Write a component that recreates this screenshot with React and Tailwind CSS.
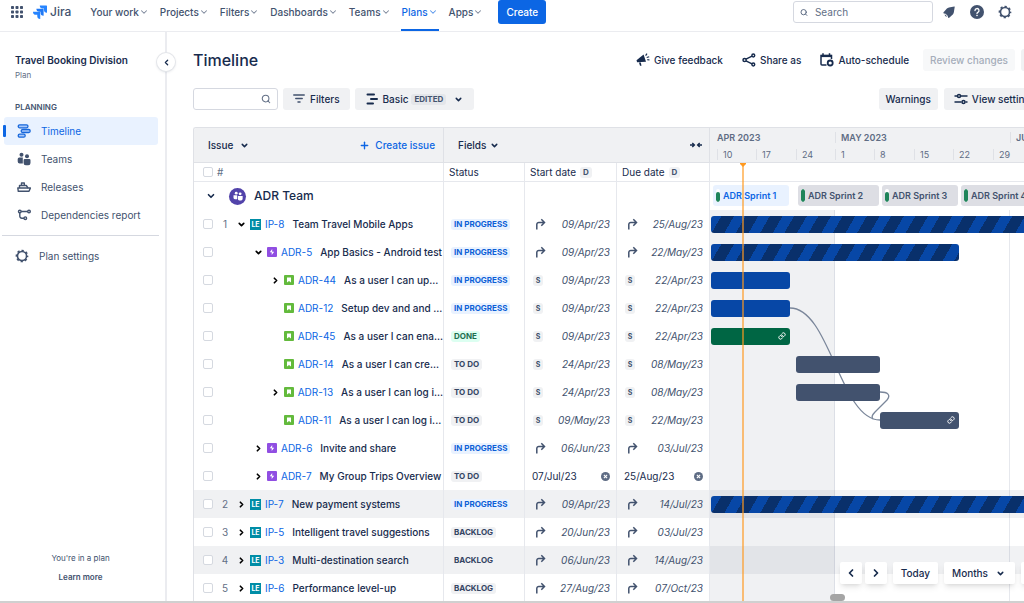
import { ChevronDown, ChevronLeft, ChevronRight, Plus, Search } from 'lucide-react'

const DAY_WIDTH = 5.63
const MAY_FIRST = 125

const navItems = ['Your work', 'Projects', 'Filters', 'Dashboards', 'Teams', 'Plans', 'Apps']

const sideItems = [
  { label: 'Timeline', icon: TimelineIcon, active: true },
  { label: 'Teams', icon: TeamsIcon },
  { label: 'Releases', icon: ShipIcon },
  { label: 'Dependencies report', icon: DependencyIcon },
]

// Bar start and end are days counted from 1 May 2023.
const issues = [
  { key: 'IP-8', level: 0, number: 1, type: 'initiative', toggle: 'open', title: 'Team Travel Mobile Apps', status: 'IN PROGRESS', source: 'rollup', start: '09/Apr/23', due: '25/Aug/23', bar: { from: -22, to: 117, kind: 'striped' } },
  { key: 'ADR-5', level: 1, type: 'epic', toggle: 'open', title: 'App Basics - Android test', status: 'IN PROGRESS', source: 'rollup', start: '09/Apr/23', due: '22/May/23', bar: { from: -22, to: 22, kind: 'striped' } },
  { key: 'ADR-44', level: 2, type: 'story', toggle: 'closed', title: 'As a user I can up...', status: 'IN PROGRESS', source: 'sprint', start: '09/Apr/23', due: '22/Apr/23', bar: { from: -22, to: -8, kind: 'progress' } },
  { key: 'ADR-12', level: 2, type: 'story', title: 'Setup dev and and ...', status: 'IN PROGRESS', source: 'sprint', start: '09/Apr/23', due: '22/Apr/23', bar: { from: -22, to: -8, kind: 'progress' } },
  { key: 'ADR-45', level: 2, type: 'story', title: 'As a user I can ena...', status: 'DONE', source: 'sprint', start: '09/Apr/23', due: '22/Apr/23', bar: { from: -22, to: -8, kind: 'done', linked: true } },
  { key: 'ADR-14', level: 2, type: 'story', title: 'As a user I can cre...', status: 'TO DO', source: 'sprint', start: '24/Apr/23', due: '08/May/23', bar: { from: -7, to: 8, kind: 'todo' } },
  { key: 'ADR-13', level: 2, type: 'story', toggle: 'closed', title: 'As a user I can log i...', status: 'TO DO', source: 'sprint', start: '24/Apr/23', due: '08/May/23', bar: { from: -7, to: 8, kind: 'todo' } },
  { key: 'ADR-11', level: 2, type: 'story', title: 'As a user I can log i...', status: 'TO DO', source: 'sprint', start: '09/May/23', due: '22/May/23', bar: { from: 8, to: 22, kind: 'todo', linked: true } },
  { key: 'ADR-6', level: 1, type: 'epic', toggle: 'closed', title: 'Invite and share', status: 'IN PROGRESS', source: 'rollup', start: '06/Jun/23', due: '03/Jul/23' },
  { key: 'ADR-7', level: 1, type: 'epic', toggle: 'closed', title: 'My Group Trips Overview', status: 'TO DO', source: 'manual', start: '07/Jul/23', due: '25/Aug/23' },
  { key: 'IP-7', level: 0, number: 2, type: 'initiative', toggle: 'closed', title: 'New payment systems', status: 'IN PROGRESS', source: 'rollup', start: '09/Apr/23', due: '14/Jul/23', shaded: true, bar: { from: -22, to: 75, kind: 'striped' } },
  { key: 'IP-5', level: 0, number: 3, type: 'initiative', toggle: 'closed', title: 'Intelligent travel suggestions', status: 'BACKLOG', source: 'rollup', start: '20/Jun/23', due: '03/Jul/23' },
  { key: 'IP-3', level: 0, number: 4, type: 'initiative', toggle: 'closed', title: 'Multi-destination search', status: 'BACKLOG', source: 'rollup', start: '06/Jun/23', due: '14/Aug/23', shaded: true },
  { key: 'IP-6', level: 0, number: 5, type: 'initiative', toggle: 'closed', title: 'Performance level-up', status: 'BACKLOG', source: 'rollup', start: '27/Aug/23', due: '07/Oct/23' },
]

const months = [
  { label: 'APR 2023', at: -22 },
  { label: 'MAY 2023', at: 0, tick: true },
  { label: 'JUN 2023', at: 31, tick: true },
]

const weeks = [
  { label: '10', at: -21 },
  { label: '17', at: -14 },
  { label: '24', at: -7 },
  { label: '1', at: 0 },
  { label: '8', at: 7 },
  { label: '15', at: 14 },
  { label: '22', at: 21 },
  { label: '29', at: 28 },
]

const sprints = [
  { label: 'ADR Sprint 1', from: -22, to: -8, active: true },
  { label: 'ADR Sprint 2', from: -7, to: 8, full: true },
  { label: 'ADR Sprint 3', from: 8, to: 22 },
  { label: 'ADR Sprint 4', from: 22, to: 36, full: true },
]

const statusClass = {
  'IN PROGRESS': 'bg-[#e9f2ff] text-[#0c5fd6]',
  DONE: 'bg-[#dcfff1] text-[#216e4e]',
  'TO DO': 'bg-[#f0f1f3] text-[#344563]',
  BACKLOG: 'bg-[#f0f1f3] text-[#344563]',
}

const barClass = {
  striped: 'bg-[repeating-linear-gradient(120deg,#0747a6_0px,#0747a6_9px,#09306b_9px,#09306b_20px,#0747a6_20px,#0747a6_21px)]',
  progress: 'bg-[#0747a6]',
  done: 'bg-[#006644]',
  todo: 'bg-[#42526e]',
}

const indentClass = ['pl-0', 'pl-[17px]', 'pl-[34px]']

function dayX(day) {
  return Math.round(MAY_FIRST + day * DAY_WIDTH)
}

function AppsIcon() {
  return (
    <svg width="12" height="12" viewBox="0 0 12 12" fill="#42526e">
      {[0, 4.5, 9].map((y) => [0, 4.5, 9].map((x) => <rect key={`${x}-${y}`} x={x} y={y} width="3" height="3" rx="0.7" />))}
    </svg>
  )
}

function JiraMark() {
  return (
    <svg width="14" height="14" viewBox="0 0 24 24">
      <path d="M23 1H11.6a5.1 5.1 0 0 0 5.1 5.1h2.1v2a5.1 5.1 0 0 0 5.2 5.1V2a1 1 0 0 0-1-1z" fill="#2684ff" />
      <path d="M17.2 6.3H5.8a5.1 5.1 0 0 0 5.1 5.1H13v2a5.1 5.1 0 0 0 5.2 5.2V7.3a1 1 0 0 0-1-1z" fill="#1f78f5" />
      <path d="M11.5 11.6H0a5.1 5.1 0 0 0 5.2 5.2h2.1v2a5.1 5.1 0 0 0 5.1 5.1V12.6a1 1 0 0 0-1-1z" fill="#2684ff" />
    </svg>
  )
}

function BellIcon() {
  return (
    <svg width="14" height="14" viewBox="0 0 14 14" fill="#42526e">
      <path d="M12.300 1.500 7 2.400a3.500 3.500 0 0 0-2.100 1.200L1.600 7.300c-.4.500-.2 1 .3 1.100l1.700.4 2 2 .5 1.800c.2.500.7.600 1.100.2l3.600-3.400a3.500 3.500 0 0 0 1-2l.9-5.500c0-.3-.1-.4-.4-.4z" />
      <path d="M2.900 9.200a1.800 1.800 0 0 0 2.300 2.300z" />
    </svg>
  )
}

function HelpIcon() {
  return (
    <svg width="14" height="14" viewBox="0 0 14 14">
      <circle cx="7" cy="7" r="7" fill="#42526e" />
      <path d="M5 5.500a2 2 0 1 1 2.900 1.800c-.6.300-.9.600-.9 1.200" fill="none" stroke="#fff" strokeWidth="1.300" strokeLinecap="round" />
      <circle cx="7" cy="10.500" r="0.800" fill="#fff" />
    </svg>
  )
}

function GearIcon() {
  return (
    <svg width="14" height="14" viewBox="0 0 24 24" fill="none" stroke="#42526e">
      <circle cx="12" cy="12" r="7.800" strokeWidth="2.800" />
      <circle cx="12" cy="12" r="9.500" strokeWidth="2.800" strokeDasharray="3.900 3.561" strokeDashoffset="1.950" />
    </svg>
  )
}

function TimelineIcon() {
  return (
    <svg width="14" height="14" viewBox="0 0 14 14" fill="#a9c9fb" stroke="#1868db" strokeWidth="1.300">
      <rect x="1.200" y="0.800" width="9.800" height="3" rx="1.500" />
      <rect x="4.200" y="5.500" width="9" height="3" rx="1.500" />
      <rect x="1.200" y="10.200" width="7" height="3" rx="1.500" />
    </svg>
  )
}

function TeamsIcon() {
  return (
    <svg width="14" height="14" viewBox="0 0 14 14" fill="#42526e">
      <circle cx="4.500" cy="2.700" r="2" />
      <path d="M0.700 7a1.500 1.500 0 0 1 1.500-1.500h3.600V11.500H2.700a2 2 0 0 1-2-2z" />
      <circle cx="10" cy="4.300" r="2" />
      <path d="M6.600 8.200A1.200 1.200 0 0 1 7.800 7h4.500a1.200 1.200 0 0 1 1.200 1.200V11a2.200 2.200 0 0 1-2.200 2.200H8.800A2.200 2.200 0 0 1 6.600 11z" />
    </svg>
  )
}

function ShipIcon() {
  return (
    <svg width="14" height="14" viewBox="0 0 14 14" fill="none" stroke="#42526e" strokeWidth="1.400" strokeLinejoin="round">
      <path d="M0.800 8h12.600l-1.400 3.300H1.300z" />
      <path d="M2.500 8V5.500h6.800L11 8M4.500 5.500V3h2.800v2.500" />
    </svg>
  )
}

function DependencyIcon() {
  return (
    <svg width="14" height="14" viewBox="0 0 14 14" fill="none" stroke="#42526e" strokeWidth="1.400">
      <circle cx="2.800" cy="3.500" r="1.300" />
      <circle cx="12" cy="3.500" r="1.300" />
      <circle cx="8.300" cy="10.200" r="1.300" />
      <path d="M4.100 3.500h6.600M2.800 4.800v3.200a2 2 0 0 0 2 2.200H7" />
    </svg>
  )
}

function MegaphoneIcon() {
  return (
    <svg width="14" height="14" viewBox="0 0 14 14" fill="#172b4d">
      <path d="M0.500 7.200 7.600 1.500 10 8.700 1.100 9.300z" />
      <path d="M3 9.500h1.800l.7 3.200H4z" />
      <path d="M9.600 2.700 11 0.600M10.700 4.500l2.500-.8M11.300 6.600l2.200.4" fill="none" stroke="#172b4d" strokeWidth="1.200" />
    </svg>
  )
}

function ShareIcon() {
  return (
    <svg width="14" height="14" viewBox="0 0 14 14" fill="none" stroke="#172b4d" strokeWidth="1.500">
      <circle cx="2.600" cy="7" r="1.600" />
      <circle cx="11.300" cy="2.500" r="1.400" />
      <circle cx="11.300" cy="11.500" r="1.400" />
      <path d="m4 6.200 6-3M4 7.800l6 3" />
    </svg>
  )
}

function ScheduleIcon() {
  return (
    <svg width="14" height="14" viewBox="0 0 14 14" fill="none" stroke="#172b4d" strokeWidth="1.500">
      <path d="M6.500 12H2a1 1 0 0 1-1-1V2.500h10.500V6" />
      <path d="M1 3h10.500" strokeWidth="2.200" />
      <path d="M3 0.300v2M9.500 0.300v2" />
      <circle cx="10.200" cy="10" r="2.500" strokeWidth="1.800" />
    </svg>
  )
}

function FilterIcon() {
  return (
    <svg width="12" height="12" viewBox="0 0 12 12" stroke="#42526e" strokeWidth="1.500" strokeLinecap="round">
      <path d="M0.800 2h10.400M2.800 5.500h6.400M5 9h2" />
    </svg>
  )
}

function RoadmapIcon() {
  return (
    <svg width="12" height="12" viewBox="0 0 12 12" stroke="#172b4d" strokeWidth="2" strokeLinecap="round">
      <path d="M1.500 1.500h6.500M5 6h6M1.500 10.500h5.500" />
    </svg>
  )
}

function SlidersIcon() {
  return (
    <svg width="14" height="12" viewBox="0 0 14 12" fill="none" stroke="#172b4d" strokeWidth="1.500">
      <path d="M0.500 3h3M6.500 3h7M0.500 9h7M11.500 9h2" />
      <circle cx="5" cy="3" r="1.500" />
      <circle cx="9.500" cy="9" r="1.500" />
    </svg>
  )
}

function CollapseIcon() {
  return (
    <svg width="12" height="8" viewBox="0 0 12 8" fill="none" stroke="#172b4d" strokeWidth="1.400">
      <path d="M0 4h4M2.300 1.900 4.400 4 2.300 6.100M12 4H8M9.700 1.900 7.600 4l2.100 2.100" />
    </svg>
  )
}

function RollupIcon() {
  return (
    <svg className="mx-[2px]" width="11" height="12" viewBox="0 0 11 12" fill="none" stroke="#42526e" strokeWidth="1.500">
      <path d="M1.800 11.500V6.500A2 2 0 0 1 3.800 4.500H9M6.300 1.300 9.500 4.500 6.300 7.700" />
    </svg>
  )
}

function ClearIcon() {
  return (
    <svg width="9" height="9" viewBox="0 0 10 10">
      <circle cx="5" cy="5" r="5" fill="#5e6c84" />
      <path d="m3.200 3.200 3.600 3.600M6.800 3.200 3.200 6.800" stroke="#fff" strokeWidth="1.200" />
    </svg>
  )
}

function LinkIcon() {
  return (
    <svg width="8" height="8" viewBox="0 0 24 24" fill="none" stroke="#fff" strokeWidth="3" strokeLinecap="round">
      <path d="M10 13a5 5 0 0 0 7.500.500l3-3a5 5 0 0 0-7-7l-1.700 1.700" />
      <path d="M14 11a5 5 0 0 0-7.500-.500l-3 3a5 5 0 0 0 7 7l1.700-1.700" />
    </svg>
  )
}

function TypeIcon({ type }) {
  if (type === 'initiative') {
    return (
      <span className="grid h-[11px] w-[11px] shrink-0 place-items-center bg-[#008da6] text-[7px] font-bold leading-none text-white">
        LE
      </span>
    )
  }

  if (type === 'epic') {
    return (
      <svg className="shrink-0" width="10" height="10" viewBox="0 0 10 10">
        <rect width="10" height="10" rx="1" fill="#904ee2" />
        <path d="M5.200 2 2.800 5.300h1.900V8l2.500-3.300H5.200z" fill="#fff" />
      </svg>
    )
  }

  return (
    <svg className="shrink-0" width="10" height="10" viewBox="0 0 10 10">
      <rect width="10" height="10" rx="1" fill="#63ba3c" />
      <path d="M3 2.400h4v5.200L5 5.900 3 7.600z" fill="#fff" />
    </svg>
  )
}

function Checkbox({ label }) {
  return (
    <input
      aria-label={label}
      className="h-[10px] w-[10px] shrink-0 appearance-none rounded-[2px] border border-[#d5d9e0] bg-white"
      type="checkbox"
    />
  )
}

function TopBar() {
  return (
    <header className="flex h-8 shrink-0 items-start border-b border-[#ebecf0] pl-[11px] pr-3">
      <div className="flex h-6 items-center">
        <button aria-label="Switch to" type="button">
          <AppsIcon />
        </button>
        <a className="ml-[10px] flex items-center gap-[3px] text-xs font-medium text-[#42526e]" href="#home">
          <JiraMark />
          Jira
        </a>
      </div>
      <nav className="ml-[18px] flex gap-[9px]">
        {navItems.map((item) => (
          <button
            className={`flex h-[31px] items-start border-b-2 px-px text-[10px] font-medium ${
              item === 'Plans' ? 'border-[#0c66e4] text-[#0c66e4]' : 'border-transparent text-[#42526e]'
            }`}
            key={item}
            type="button"
          >
            <span className="flex h-6 items-center whitespace-nowrap">
              {item}
              <ChevronDown className="opacity-70" size={10} strokeWidth={2.5} />
            </span>
          </button>
        ))}
      </nav>
      <button className="ml-[14px] h-6 rounded-[3px] bg-[#0c66e4] px-2 text-[10px] font-medium text-white" type="button">
        Create
      </button>
      <div className="ml-auto flex h-6 items-center gap-[14px] text-[#42526e]">
        <label className="-mr-[5px] flex h-[22px] w-[140px] items-center gap-[7px] rounded-[3px] border border-[#d5d8e0] px-[6px]">
          <Search size={9} strokeWidth={2.5} />
          <input
            aria-label="Search"
            className="w-full min-w-0 text-[10px] outline-none placeholder:text-[#626f86]"
            placeholder="Search"
            type="text"
          />
        </label>
        <button aria-label="Notifications" type="button">
          <BellIcon />
        </button>
        <button aria-label="Help" type="button">
          <HelpIcon />
        </button>
        <button aria-label="Settings" type="button">
          <GearIcon />
        </button>
      </div>
    </header>
  )
}

function Sidebar() {
  return (
    <aside className="relative flex w-[167px] shrink-0 flex-col border-r-2 border-[#ebecf0] pt-5">
      <h2 className="pl-[15px] text-[10px] font-semibold leading-4 text-[#172b4d]">Travel Booking Division</h2>
      <p className="pl-[15px] text-[8px] leading-[14px] text-[#626f86]">Plan</p>
      <p className="mt-[17px] pl-[15px] text-[8px] font-semibold leading-4 text-[#44546f]">PLANNING</p>
      <nav className="mt-[2px] pl-1 pr-[7px] text-[10px]">
        {sideItems.map((item) => (
          <a
            className={`relative flex h-7 items-center gap-[10px] rounded-[3px] pl-[13px] ${
              item.active ? 'bg-[#e9f2ff] text-[#0c66e4]' : 'text-[#42526e]'
            }`}
            href={`#${item.label}`}
            key={item.label}
          >
            {item.active && <span className="absolute -left-px top-2 h-3 w-[3px] rounded-[1px] bg-[#0c66e4]" />}
            <item.icon />
            {item.label}
          </a>
        ))}
      </nav>
      <hr className="ml-[2px] mr-[6px] mt-[6px] border-[#d5d8e0]" />
      <a className="mt-[6px] flex h-7 items-center gap-[10px] pl-[15px] text-[10px] text-[#42526e]" href="#settings">
        <GearIcon />
        Plan settings
      </a>
      <div className="mb-[14px] mt-auto pr-1 text-center text-[8px] leading-[19px] text-[#42526e]">
        <p>You're in a plan</p>
        <a className="font-semibold" href="#learn">
          Learn more
        </a>
      </div>
      <button
        aria-label="Collapse sidebar"
        className="absolute -right-[10px] top-[21px] grid h-[18px] w-[18px] place-items-center rounded-full bg-white text-[#172b4d] shadow-[0_0_0_1px_#e4e6ea,0_1px_3px_#091e4229]"
        type="button"
      >
        <ChevronLeft size={9} strokeWidth={3.5} />
      </button>
    </aside>
  )
}

function PageHeader() {
  return (
    <div className="flex h-[26px] items-center overflow-hidden">
      <h1 className="text-base font-medium text-[#172b4d]">Timeline</h1>
      <div className="-mr-4 ml-auto flex shrink-0 items-center text-[10px] font-medium text-[#172b4d]">
        <button className="flex items-center gap-1" type="button">
          <MegaphoneIcon />
          Give feedback
        </button>
        <button className="ml-[19px] flex items-center gap-1" type="button">
          <ShareIcon />
          Share as
        </button>
        <button className="ml-[19px] flex items-center gap-1" type="button">
          <ScheduleIcon />
          Auto-schedule
        </button>
        <button className="ml-[14px] h-[22px] rounded-[3px] bg-[#f7f8f9] px-[7px] text-[#a5adba]" disabled type="button">
          Review changes
        </button>
        <button aria-label="More actions" className="ml-[6px] h-[22px] w-[19px] rounded-[3px] bg-[#f0f1f3]" type="button" />
      </div>
    </div>
  )
}

function Toolbar() {
  return (
    <div className="mt-[15px] flex h-[22px] overflow-hidden text-[10px] font-medium text-[#172b4d]">
      <label className="flex w-[85px] items-center rounded-[3px] border border-[#d5d8e0] px-[6px] text-[#626f86]">
        <input aria-label="Search issues" className="w-full min-w-0 outline-none" type="text" />
        <Search className="shrink-0" size={10} strokeWidth={2.5} />
      </label>
      <button className="ml-[5px] flex items-center gap-[5px] rounded-[3px] bg-[#f0f1f3] px-[10px]" type="button">
        <FilterIcon />
        Filters
      </button>
      <button className="ml-[5px] flex items-center rounded-[3px] bg-[#f0f1f3] px-[11px]" type="button">
        <RoadmapIcon />
        <span className="ml-[5px]">Basic</span>
        <span className="ml-[3px] rounded-[3px] bg-[#e4e6ea] px-[3px] text-[8px] font-bold leading-[11px] text-[#44546f]">EDITED</span>
        <ChevronDown className="ml-2" size={9} strokeWidth={4} />
      </button>
      <button className="ml-auto rounded-[3px] bg-[#f0f1f3] px-[7px]" type="button">
        Warnings
      </button>
      <button className="-mr-[22px] ml-[6px] flex shrink-0 items-center gap-1 rounded-[3px] bg-[#f0f1f3] px-[10px]" type="button">
        <SlidersIcon />
        View settings
      </button>
    </div>
  )
}

function DateCell({ source, value, label }) {
  if (source === 'manual') {
    return (
      <div className="flex items-center justify-between pl-[7px] pr-[6px] text-[#172b4d]">
        {value}
        <button aria-label={`Clear ${label}`} type="button">
          <ClearIcon />
        </button>
      </div>
    )
  }

  return (
    <div className="flex items-center justify-between pl-2 pr-[6px] text-[#42526e]">
      {source === 'rollup' ? (
        <RollupIcon />
      ) : (
        <span className="w-[10px] rounded-[3px] bg-[#f0f1f3] text-center text-[7px] font-bold leading-[11px]">S</span>
      )}
      <span className="italic">{value}</span>
    </div>
  )
}

function IssueRow({ issue }) {
  const Chevron = issue.toggle === 'open' ? ChevronDown : ChevronRight

  return (
    <tr className={issue.shaded ? 'bg-[#f0f1f3]' : ''}>
      <td className="h-7 border-r border-[#e6e8ed]">
        <div className="flex items-center whitespace-nowrap pl-[9px]">
          <Checkbox label={`Select ${issue.key}`} />
          <span className="w-6 text-center text-[#626f86]">{issue.number}</span>
          <div className={`flex items-center ${indentClass[issue.level]}`}>
            <span className="w-[9px] text-black">
              {issue.toggle && (
                <button aria-label={`Toggle ${issue.key}`} className="block" type="button">
                  <Chevron size={9} strokeWidth={4.5} />
                </button>
              )}
            </span>
            <span className="w-1" />
            <TypeIcon type={issue.type} />
            <a className="ml-1 text-[#0c66e4]" href={`#${issue.key}`}>
              {issue.key}
            </a>
            <span className="ml-2 font-medium text-[#172b4d]">{issue.title}</span>
          </div>
        </div>
      </td>
      <td className="border-r border-[#e6e8ed] pl-[7px]">
        <span className={`block w-fit rounded-[3px] px-[3px] text-[8px] font-bold leading-[11px] ${statusClass[issue.status]}`}>
          {issue.status}
        </span>
      </td>
      <td className="border-r border-[#e6e8ed]">
        <DateCell label="start date" source={issue.source} value={issue.start} />
      </td>
      <td className="border-r border-[#e6e8ed]">
        <DateCell label="due date" source={issue.source} value={issue.due} />
      </td>
    </tr>
  )
}

function DefaultBadge() {
  return <span className="ml-1 rounded-[3px] bg-[#f0f1f3] px-[3px] text-[8px] font-bold leading-[11px] text-[#44546f]">D</span>
}

function IssueTable() {
  return (
    <table className="w-[516px] shrink-0 table-fixed border-separate border-spacing-0 self-start text-[10px] leading-[14px]">
      <colgroup>
        <col className="w-[250px]" />
        <col className="w-[81px]" />
        <col className="w-[92px]" />
        <col className="w-[93px]" />
      </colgroup>
      <thead className="text-left text-[#172b4d]">
        <tr className="bg-[#f0f1f3]">
          <th className="h-[35px] border-b border-r border-[#dfe1e6] p-0 font-medium">
            <div className="flex items-center justify-between pl-[14px] pr-2">
              <button className="flex items-center gap-[7px]" type="button">
                Issue
                <ChevronDown size={9} strokeWidth={4} />
              </button>
              <button className="flex items-center gap-[5px] text-[#0c66e4]" type="button">
                <Plus size={11} strokeWidth={3} />
                Create issue
              </button>
            </div>
          </th>
          <th className="border-b border-r border-[#dfe1e6] p-0 font-medium" colSpan={3}>
            <div className="flex items-center justify-between pl-[14px] pr-[7px]">
              <button className="flex items-center gap-1" type="button">
                Fields
                <ChevronDown size={9} strokeWidth={4} />
              </button>
              <button aria-label="Collapse fields" type="button">
                <CollapseIcon />
              </button>
            </div>
          </th>
        </tr>
        <tr className="font-normal">
          <th className="h-[19px] border-b border-r border-[#e6e8ed] p-0 font-normal">
            <div className="flex items-center gap-1 pl-[9px] text-[#626f86]">
              <Checkbox label="Select all issues" />#
            </div>
          </th>
          <th className="border-b border-r border-[#e6e8ed] pl-[5px] font-normal">Status</th>
          <th className="border-b border-r border-[#e6e8ed] pl-[5px] font-normal">
            <span className="flex items-center">
              Start date
              <DefaultBadge />
            </span>
          </th>
          <th className="border-b border-r border-[#e6e8ed] pl-[5px] font-normal">
            <span className="flex items-center">
              Due date
              <DefaultBadge />
            </span>
          </th>
        </tr>
      </thead>
      <tbody>
        <tr>
          <td className="h-7 border-r border-[#e6e8ed]">
            <div className="flex items-center pl-3 text-xs font-medium text-[#172b4d]">
              <button aria-label="Toggle ADR Team" type="button">
                <ChevronDown size={10} strokeWidth={4} />
              </button>
              <span className="ml-[13px] mr-2 grid h-[17px] w-[17px] place-items-center rounded-full bg-[#5243aa]">
                <svg width="10" height="10" viewBox="0 0 14 14" fill="#fff">
                  <circle cx="4.500" cy="3" r="2" />
                  <path d="M0.700 6h5.100v5.500H2.700a2 2 0 0 1-2-2z" />
                  <circle cx="10" cy="4" r="2" />
                  <path d="M6.800 7h6.700v4a2.200 2.200 0 0 1-2.200 2.200H9A2.200 2.200 0 0 1 6.800 11z" />
                </svg>
              </span>
              ADR Team
            </div>
          </td>
          <td className="border-r border-[#e6e8ed]" />
          <td className="border-r border-[#e6e8ed]" />
          <td className="border-r border-[#e6e8ed]" />
        </tr>
        {issues.map((issue) => (
          <IssueRow issue={issue} key={issue.key} />
        ))}
      </tbody>
    </table>
  )
}

function ChartHeader() {
  return (
    <div className="relative h-[35px] border-b border-[#dfe1e6] bg-[#f0f1f3] text-[#5e6c84]">
      {months.map((month) => (
        <span
          className={`absolute top-1 whitespace-nowrap border-l pl-[5px] text-[9px] font-semibold leading-[11px] ${
            month.tick ? 'border-[#dfe1e6]' : 'border-transparent'
          }`}
          key={month.label}
          style={{ left: dayX(month.at) }}
        >
          {month.label}
        </span>
      ))}
      {weeks.map((week) => (
        <span
          className="absolute top-[21px] border-l border-[#dfe1e6] pl-[5px] text-[9px] leading-[11px]"
          key={week.label}
          style={{ left: dayX(week.at) }}
        >
          {week.label}
        </span>
      ))}
    </div>
  )
}

function SprintRow() {
  return (
    <div className="relative h-7">
      {sprints.map((sprint) => (
        <div
          className={`absolute top-[3px] flex h-[21px] items-center gap-[3px] overflow-hidden whitespace-nowrap rounded-[3px] pl-[3px] text-[9px] font-semibold ${
            sprint.active ? 'bg-[#e9f2ff] text-[#0c66e4]' : 'bg-[#dddee4] text-[#42526e]'
          }`}
          key={sprint.label}
          style={{ left: dayX(sprint.from) + 2, width: dayX(sprint.to) - dayX(sprint.from) - 3 }}
        >
          <span className="flex h-[13px] w-1 items-end overflow-hidden rounded-[2px] bg-white">
            <span className={`w-full rounded-[2px] bg-[#1f845a] ${sprint.full ? 'h-full' : 'h-[10px]'}`} />
          </span>
          {sprint.label}
        </div>
      ))}
    </div>
  )
}

function Chart() {
  return (
    <div className="relative min-w-0 flex-1 overflow-hidden">
      <ChartHeader />
      <div className="h-[19px] border-b border-[#e6e8ed]" />
      <SprintRow />
      <div className="relative">
        <div className="absolute inset-y-0 left-0 border-r border-[#dcdfe6] bg-[#f0f1f3]" style={{ width: dayX(0) }} />
        <div className="absolute inset-y-0 w-px bg-[#e6e8ed]" style={{ left: dayX(31) - 1 }} />
        <svg className="absolute left-0 top-0" width="200" height="240" fill="none" stroke="#7a869a" strokeWidth="1.300">
          <path d="M80 98C120 98 130 210 170 210" />
          <path d="M170 182c8 0 11 3 7 8l-12 12c-3 3-4 5-2 7" />
        </svg>
        {issues.map((issue) => (
          <div className={`relative flex h-7 items-center ${issue.shaded ? 'bg-[#091e42]/6' : ''}`} key={issue.key}>
            {issue.bar && (
              <div
                className={`flex h-[17px] shrink-0 items-center justify-end rounded-[3px] pr-1 ${barClass[issue.bar.kind]}`}
                style={{ marginLeft: dayX(issue.bar.from), width: dayX(issue.bar.to) - dayX(issue.bar.from) }}
              >
                {issue.bar.linked && <LinkIcon />}
              </div>
            )}
          </div>
        ))}
      </div>
      <div className="absolute bottom-0 left-8 top-[35px] w-[2px] bg-[#ff991f]/60" />
      <svg className="absolute left-[30px] top-[35px]" width="6" height="4" viewBox="0 0 6 4">
        <path d="M0 0h6v1L3 4 0 1z" fill="#ff991f" />
      </svg>
      <div className="absolute -right-3 bottom-[17px] flex h-[22px] gap-[6px] text-[10px] font-medium text-[#172b4d]">
        <div className="flex gap-[3px]">
          <button aria-label="Earlier" className="grid w-[22px] place-items-center rounded-[2px] bg-white shadow-md" type="button">
            <ChevronLeft size={12} strokeWidth={3.5} />
          </button>
          <button aria-label="Later" className="grid w-[22px] place-items-center rounded-[2px] bg-white shadow-md" type="button">
            <ChevronRight size={12} strokeWidth={3.5} />
          </button>
        </div>
        <button className="rounded-[2px] bg-white px-2 shadow-md" type="button">
          Today
        </button>
        <button className="flex items-center gap-2 rounded-[2px] bg-white pl-2 pr-[10px] shadow-md" type="button">
          Months
          <ChevronDown size={9} strokeWidth={4} />
        </button>
        <button aria-label="More zoom options" className="w-[15px] rounded-[2px] bg-white shadow-md" type="button" />
      </div>
      <div className="absolute bottom-0 left-[120px] h-[7px] w-[15px] rounded-full bg-[#a5a5a5]" />
    </div>
  )
}

export default function App() {
  return (
    <div className="flex h-screen flex-col overflow-hidden border-b-2 border-[#d0d0d0] bg-white font-['Inter','Liberation_Sans',sans-serif]">
      <TopBar />
      <div className="flex min-h-0 flex-1">
        <Sidebar />
        <main className="flex min-w-0 flex-1 flex-col pl-[26px] pt-[15px]">
          <PageHeader />
          <Toolbar />
          <div className="mt-[17px] flex min-h-0 flex-1 overflow-hidden rounded-tl-[3px] border-l border-t border-[#dfe1e6]">
            <IssueTable />
            <Chart />
          </div>
        </main>
      </div>
    </div>
  )
}
